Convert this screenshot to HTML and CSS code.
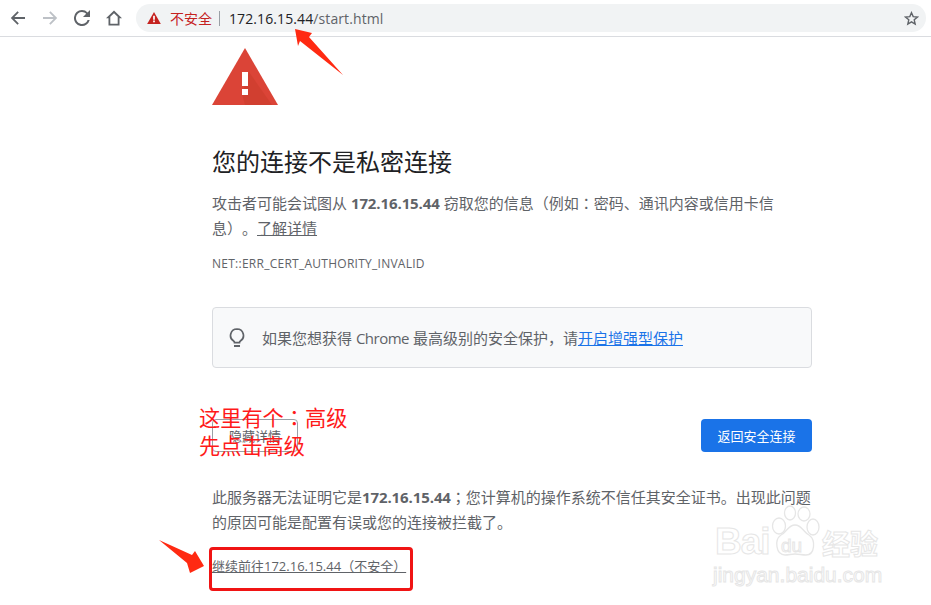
FILE: index.html
```html
<!DOCTYPE html>
<html lang="zh-CN">
<head>
  <meta charset="UTF-8" />
  <meta name="viewport" content="width=device-width, initial-scale=1.0"/>
  <title>隐私设置错误</title>
  <link rel="stylesheet" href="styles.css">
</head>
<body>
  <header class="toolbar">
    <svg class="nav-icon" viewBox="0 0 16 16"><path d="M15 7H4.400l4.400-4.400L7.500 1.300.8 8l6.700 6.700 1.300-1.300L4.400 9H15z" fill="#5f6368"/></svg>
    <svg class="nav-icon" viewBox="0 0 16 16"><path d="M1 7h10.600L7.200 2.600l1.300-1.300L15.200 8l-6.700 6.700-1.300-1.300L11.600 9H1z" fill="#bdc1c6"/></svg>
    <svg class="nav-icon" viewBox="0 0 16 16"><path d="M13.600 2.400A7.900 7.900 0 0 0 8 0a8 8 0 1 0 7.700 10h-2.100A6 6 0 1 1 8 2c1.700 0 3.100.7 4.200 1.800L9 7h7V0z" fill="#5f6368"/></svg>
    <svg class="nav-icon home" viewBox="0 0 16 16"><path fill-rule="evenodd" d="M8 .5 0 8.200h2.500V15.500h11V8.200H16zM11.700 13.700H4.300V6.800L8 3.200l3.700 3.600z" fill="#5f6368"/></svg>
    <div class="omnibox">
      <svg class="warn-small" viewBox="0 0 16 14"><path d="M8 0 16 14H0z" fill="#c5221f"/><path d="M7 4.500h2v4.500H7zM7 10h2v2H7z" fill="#fff"/></svg>
      <span class="not-secure">不安全</span>
      <span class="url"><b>172.16.15.44</b>/start.html</span>
      <svg class="star" viewBox="0 0 16 16"><path d="M8 1.800 9.800 6l4.600.4-3.500 3 1 4.500L8 11.500l-3.900 2.400 1-4.500-3.500-3L6.200 6z" fill="none" stroke="#5f6368" stroke-width="1.500"/></svg>
    </div>
  </header>

  <main class="interstitial">
    <svg class="warn-big" viewBox="0 0 66 57">
      <path d="M33 0 66 57H0z" fill="#db4437"/>
      <path d="M37 24 60 57H33L30 46z" fill="#c53929" opacity=".45"/>
      <path d="M30 24h6v14h-6zM30 41h6v6h-6z" fill="#fff"/>
    </svg>

    <h1>您的连接不是私密连接</h1>
    <p class="text">攻击者可能会试图从 <strong>172.16.15.44</strong> 窃取您的信息（例如<span class="mid" lang="zh-TW">：</span>密码、通讯内容或信用卡信息）。<a href="#" class="learn">了解详情</a></p>
    <div class="error-code">NET::ERR_CERT_AUTHORITY_INVALID</div>

    <div class="hint">
      <svg class="bulb" viewBox="0 0 16 20"><path d="M8 1a6.500 6.500 0 0 0-3.400 12c.6.400.9 1 .9 1.600h5c0-.6.300-1.200.9-1.600A6.500 6.500 0 0 0 8 1z" fill="none" stroke="#5f6368" stroke-width="1.700"/><path d="M5 17h6v2H5z" fill="#5f6368"/></svg>
      <span>如果您想获得 <span class="en">Chrome</span> 最高级别的安全保护，请<a href="#" class="enhance">开启增强型保护</a></span>
    </div>

    <div class="actions">
      <button class="btn-details">隐藏详情</button>
      <button class="btn-back">返回安全连接</button>
    </div>

    <p class="text details">此服务器无法证明它是<strong>172.16.15.44</strong><span class="mid" lang="zh-TW">；</span>您计算机的操作系统不信任其安全证书。出现此问题的原因可能是配置有误或您的连接被拦截了。</p>
    <a href="#" class="proceed">继续前往172.16.15.44（不安全）</a>
  </main>

  <!-- annotations pasted on top of the screenshot -->
  <svg class="arrow arrow-top" viewBox="0 0 60 55"><path d="M5 4 22 8 19 12 53 50 10 16 8 21z" fill="#ff2a12"/></svg>
  <svg class="arrow arrow-left" viewBox="0 0 60 40"><path d="M4 5 37 20 40 16 49 31 35 38 32 28z" fill="#ff2a12"/></svg>
  <div class="note">这里有个<span class="mid" lang="zh-TW">：</span>高级<br>先点击高级</div>
  <div class="red-box"></div>

  <div class="watermark">
    <svg class="paw" viewBox="0 0 50 52" fill="#fff" stroke="#e6e6e6" stroke-width="1.300">
      <ellipse cx="9" cy="21" rx="6.500" ry="8"/>
      <ellipse cx="20" cy="8" rx="5.500" ry="7"/>
      <ellipse cx="34" cy="9" rx="6" ry="7"/>
      <ellipse cx="43" cy="22" rx="6" ry="8"/>
      <path d="M25 20c-7 0-8 7-14 10-7 5-5 20 4 20 4 0 6-1 10-1s7 1 11 1c9 0 10-15 3-20-6-3-7-10-14-10z"/>
    </svg>
    <span class="wm-bai">Bai</span><span class="wm-du">du</span><span class="wm-cn">经验</span>
    <div class="wm-url">jingyan.baidu.com</div>
  </div>
</body>
</html>
```

FILE: styles.css
```css
* {
  box-sizing: border-box;
}

html, body {
  height: 605px;
  overflow: hidden;
}

body {
  margin: 0;
  background: #fff;
  color: #5f6368;
  font-family: 'Open Sans', 'Noto Sans CJK SC', sans-serif;
  text-spacing-trim: space-all;
  position: relative;
}

/* centred punctuation like the original font */
.mid {
  font-family: 'Noto Sans CJK TC', sans-serif;
}

/* browser chrome */
.toolbar {
  height: 37px;
  padding: 4px 5px 0 10px;
  display: flex;
  align-items: flex-start;
  border-bottom: 1px solid #dadce0;
}

.nav-icon {
  width: 16px;
  height: 16px;
  margin: 6px 16px 0 0;
  flex: none;
}

.nav-icon.home {
  margin-right: 14px;
}

.omnibox {
  flex: 1;
  height: 28px;
  background: #f1f3f4;
  border-radius: 14px;
  display: flex;
  align-items: center;
  padding: 0 7px 0 11px;
}

.warn-small {
  width: 14px;
  height: 12px;
  margin-right: 9px;
}

.not-secure {
  color: #c5221f;
  font-size: 14px;
  padding-right: 7px;
  border-right: 1px solid #9aa0a6;
  line-height: 15px;
}

.url {
  margin-left: 9px;
  font-size: 14px;
  letter-spacing: .1px;
  color: #5f6368;
  flex: 1;
}

.url b {
  font-weight: 400;
  color: #202124;
}

.star {
  width: 15px;
  height: 15px;
}

/* page */
.interstitial {
  width: 600px;
  margin-left: 212px;
  padding-top: 11px;
}

.warn-big {
  display: block;
  width: 66px;
  height: 57px;
}

h1 {
  margin: 40px 0 0;
  font-size: 24px;
  font-weight: 400;
  line-height: 34px;
  color: #202124;
}

.text {
  margin: 11px 0 0;
  font-size: 15px;
  line-height: 25px;
  color: #5f6368;
}

.text strong {
  font-weight: 700;
  letter-spacing: -.1px;
}

.learn {
  color: #5f6368;
}

.error-code {
  margin-top: 15px;
  font-size: 12px;
  line-height: 16px;
  letter-spacing: .26px;
  color: #5f6368;
}

.hint {
  margin-top: 35px;
  height: 61px;
  padding-left: 16px;
  background: #f8f9fa;
  border: 1px solid #dadce0;
  border-radius: 4px;
  display: flex;
  align-items: center;
  font-size: 15px;
}

.hint .en {
  letter-spacing: -.5px;
}

.bulb {
  width: 16px;
  height: 20px;
  margin-right: 17px;
  flex: none;
}

.enhance {
  color: #1a73e8;
}

.actions {
  margin-top: 51px;
  display: flex;
  justify-content: space-between;
}

.actions button {
  height: 33px;
  font-family: inherit;
  font-size: 13px;
  border-radius: 4px;
}

.btn-details {
  width: 86px;
  background: #fff;
  color: #5f6368;
  border: 1px solid #9aa0a6;
}

.btn-back {
  width: 111px;
  background: #1a73e8;
  color: #fff;
  border: none;
}

.details {
  margin-top: 32px;
}

.proceed {
  display: inline-block;
  margin-top: 21px;
  font-size: 13px;
  line-height: 20px;
  color: #5f6368;
}

/* annotations */
.arrow {
  position: absolute;
}

.arrow-top {
  left: 290px;
  top: 25px;
  width: 60px;
  height: 55px;
}

.arrow-left {
  left: 155px;
  top: 535px;
  width: 60px;
  height: 40px;
}

.note {
  position: absolute;
  left: 199px;
  top: 403px;
  font-size: 21.2px;
  line-height: 28px;
  color: #ff1a1a;
}

.red-box {
  position: absolute;
  left: 209px;
  top: 547px;
  width: 204px;
  height: 44px;
  border: 3px solid #f01414;
  border-radius: 4px;
}

/* watermark */
.watermark {
  position: absolute;
  left: 713px;
  top: 505px;
  width: 175px;
  height: 90px;
  color: transparent;
}

.paw {
  position: absolute;
  left: 57px;
  top: 0;
  width: 50px;
  height: 52px;
}

.wm-bai, .wm-du, .wm-cn, .wm-url {
  position: absolute;
  -webkit-text-stroke: 1px #e6e6e6;
  font-family: 'Liberation Sans', 'Noto Sans CJK SC', sans-serif;
}

.wm-bai {
  left: 2px;
  top: 17px;
  font-size: 37px;
  font-weight: 700;
  letter-spacing: -1px;
  line-height: 40px;
}

.wm-du {
  left: 68px;
  top: 30px;
  font-size: 19px;
  line-height: 22px;
}

.wm-cn {
  left: 109px;
  top: 24px;
  font-size: 28px;
  font-weight: 700;
  line-height: 34px;
}

.wm-url {
  left: 0;
  top: 58px;
  font-size: 21px;
  line-height: 24px;
  white-space: nowrap;
}
```
